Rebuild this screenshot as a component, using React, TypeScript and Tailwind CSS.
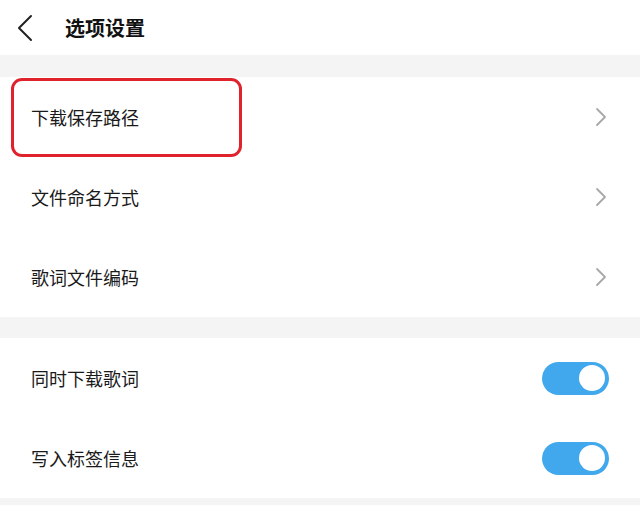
const font = { fontFamily: '"Noto Sans CJK SC", "Noto Sans", sans-serif' };

function LinkRow({ label, highlight }: { label: string; highlight?: boolean }) {
  return (
    <div className="relative flex h-[80px] items-center justify-between pl-[31px] pr-[33px]">
      {highlight ? (
        <div className="absolute left-[11px] top-[1px] h-[79px] w-[231px] rounded-[11px] border-[3px] border-[#e0222c]" />
      ) : null}
      <span className="text-[18px] text-[#1a1a1a]">{label}</span>
      <svg width="12" height="20" viewBox="0 0 12 20" fill="none">
        <polyline
          points="2,2 10,10 2,18"
          stroke="#a8a8a8"
          strokeWidth="1.8"
          strokeLinecap="round"
          strokeLinejoin="round"
        />
      </svg>
    </div>
  );
}

function ToggleRow({ label }: { label: string }) {
  return (
    <div className="flex h-[80px] items-center justify-between pl-[31px] pr-[31px]">
      <span className="text-[18px] text-[#1a1a1a]">{label}</span>
      <div className="flex h-[33px] w-[67px] items-center justify-end rounded-full bg-[#42a8ee] pr-[4px]">
        <div className="h-[26px] w-[26px] rounded-full bg-white" />
      </div>
    </div>
  );
}

export default function App() {
  return (
    <div className="h-[505px] w-[640px] bg-[#f4f4f4]" style={font}>
      <header className="flex h-[55px] items-center bg-white pl-[16px]">
        <svg width="18" height="28" viewBox="0 0 18 28" fill="none">
          <polyline
            points="15,2 3,14 15,26"
            stroke="#222"
            strokeWidth="2"
            strokeLinecap="round"
            strokeLinejoin="round"
          />
        </svg>
        <h1 className="ml-[31px] text-[20px] font-bold text-[#111]">选项设置</h1>
      </header>
      <div className="h-[22px]" />
      <section className="bg-white">
        <LinkRow label="下载保存路径" highlight />
        <LinkRow label="文件命名方式" />
        <LinkRow label="歌词文件编码" />
      </section>
      <div className="h-[21px]" />
      <section className="bg-white">
        <ToggleRow label="同时下载歌词" />
        <ToggleRow label="写入标签信息" />
      </section>
    </div>
  );
}
